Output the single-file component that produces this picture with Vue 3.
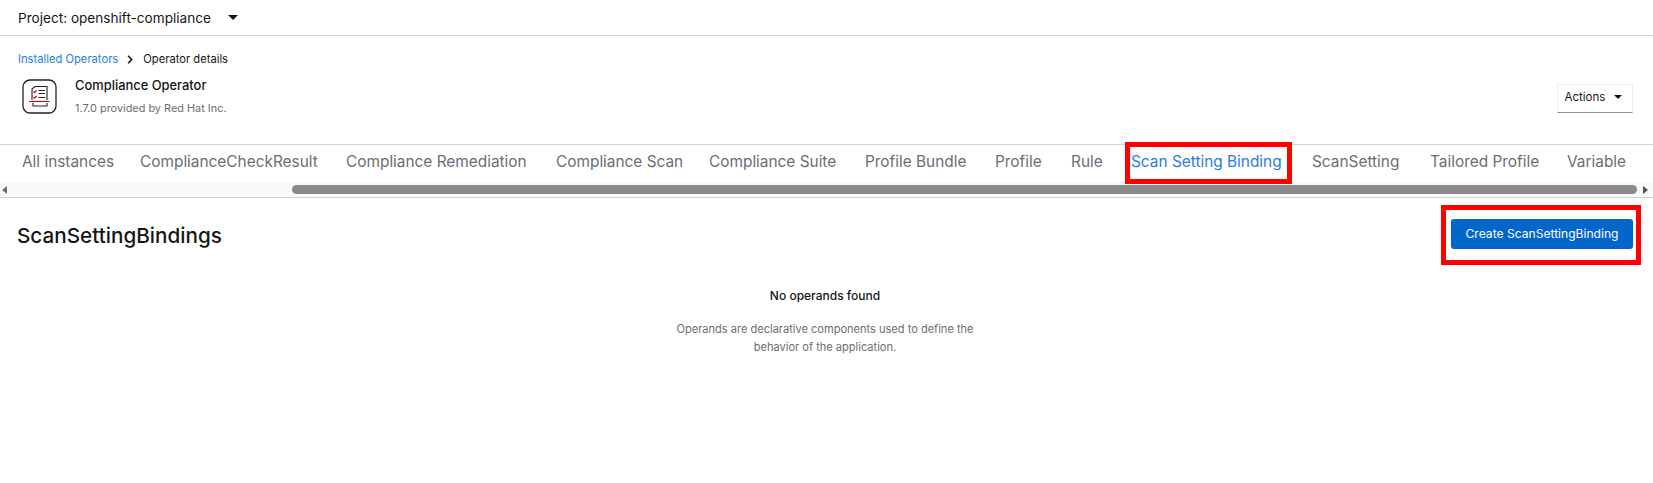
<script setup>
const tabs = [
  { label: 'All instances', w: 118 },
  { label: 'ComplianceCheckResult', w: 206 },
  { label: 'Compliance Remediation', w: 210 },
  { label: 'Compliance Scan', w: 153 },
  { label: 'Compliance Suite', w: 156 },
  { label: 'Profile Bundle', w: 130 },
  { label: 'Profile', w: 76 },
  { label: 'Rule', w: 60 },
  { label: 'Scan Setting Binding', w: 181, active: true },
  { label: 'ScanSetting', w: 118 },
  { label: 'Tailored Profile', w: 137 },
  { label: 'Variable' },
]
</script>

<template>
  <div class="page">
    <header class="project-bar">
      <span class="project">Project: openshift-compliance</span>
      <span class="caret caret-lg"></span>
    </header>

    <section class="details">
      <nav class="crumbs">
        <a class="crumb-link">Installed Operators</a>
        <svg class="crumb-sep" viewBox="0 0 8 12" width="6" height="9">
          <path d="M1.5 1 L6.2 6 L1.5 11" fill="none" stroke="#151515" stroke-width="2.2" />
        </svg>
        <span>Operator details</span>
      </nav>
      <div class="operator-row">
        <svg class="op-icon" viewBox="0 0 36 36" width="36" height="36">
          <rect x="1" y="1" width="33" height="33" rx="7" fill="#fff" stroke="#222" stroke-width="1.3" />
          <path d="M10 21 V10 L13 7.5 H25 V21 M11 24 V27 H25 V24" fill="none" stroke="#222" stroke-width="1.1" />
          <path d="M7 22.5 H27.5" stroke="#d00" stroke-width="1.1" />
          <path d="M11.5 12.5 l1.2 1.1 l2 -2.2 M11.5 18 l1.2 1.1 l2 -2.2" fill="none" stroke="#d00" stroke-width="1.2" />
          <path d="M16.5 11.5 H23 M16.5 14.5 H23 M16.5 18.5 H23" stroke="#222" stroke-width="1.1" />
        </svg>
        <div class="op-text">
          <div class="op-name">Compliance Operator</div>
          <div class="op-sub">1.7.0 provided by Red Hat Inc.</div>
        </div>
        <button class="actions">Actions <span class="caret"></span></button>
      </div>
    </section>

    <nav class="tabs">
      <a
        v-for="t in tabs"
        :key="t.label"
        class="tab"
        :class="{ active: t.active }"
        :style="t.w ? { width: t.w + 'px' } : null"
      >{{ t.label }}</a>
    </nav>
    <div class="scrollbar">
      <span class="arrow left"></span>
      <div class="track"><div class="thumb"></div></div>
      <span class="arrow right"></span>
    </div>

    <main class="content">
      <div class="list-head">
        <h1>ScanSettingBindings</h1>
        <div class="cta-mark">
          <button class="create">Create ScanSettingBinding</button>
        </div>
      </div>
      <div class="empty">
        <h2>No operands found</h2>
        <p>Operands are declarative components used to define the behavior of the application.</p>
      </div>
    </main>
  </div>
</template>

<style>
html, body { margin: 0; background: #fff; }
</style>

<style scoped>
.page {
  width: 1653px;
  height: 483px;
  overflow: hidden;
  background: #fff;
  color: #151515;
  font-family: Inter, "Noto Sans", sans-serif;
  box-sizing: border-box;
}
.project-bar {
  height: 35px;
  border-bottom: 1px solid #d2d2d2;
  display: flex;
  align-items: center;
  padding-left: 18px;
}
.project { font-size: 13.6px; width: 210px; white-space: nowrap; }
.caret {
  display: inline-block;
  width: 0;
  height: 0;
  border-left: 4px solid transparent;
  border-right: 4px solid transparent;
  border-top: 4px solid #151515;
  vertical-align: 2px;
  margin-left: 5px;
}
.caret-lg {
  border-left-width: 5px;
  border-right-width: 5px;
  border-top-width: 5px;
  margin: 0;
}
.details {
  height: 108px;
  padding: 15px 20px 0 18px;
  box-sizing: border-box;
}
.crumbs {
  display: flex;
  align-items: center;
  font-size: 11.2px;
  height: 16px;
  white-space: nowrap;
}
.crumb-link { color: #2b7de0; }
.crumb-sep { margin: 0 10px 0 9px; }
.operator-row {
  display: flex;
  align-items: flex-start;
  margin-top: 12px;
  padding-left: 4px;
}
.op-icon { flex: none; }
.op-text { margin-left: 17px; }
.op-name { font-size: 12.9px; font-weight: 500; line-height: 16px; color: #151515; margin-top: -1px; }
.op-sub { font-size: 10.9px; line-height: 16px; color: #6a6e73; margin-top: 6px; }
.actions {
  margin-left: auto;
  margin-top: 5px;
  width: 76px;
  height: 29px;
  padding: 0 4px 3px 0;
  background: #fff;
  border: 1px solid #ededed;
  border-bottom: 1px solid #8a8d90;
  color: #151515;
  font: 11.5px Inter, sans-serif;
}
.tabs {
  height: 37px;
  box-sizing: content-box;
  border-top: 1px solid #d2d2d2;
  display: flex;
  align-items: flex-start;
  padding-left: 22px;
  font-size: 15.4px;
  line-height: 34px;
  color: #6a6e73;
  white-space: nowrap;
}
.tab { display: block; flex: none; }
.active { color: #2b7de0; position: relative; }
.active::after {
  content: "";
  position: absolute;
  left: -6px;
  top: -3px;
  width: 167px;
  height: 42px;
  box-sizing: border-box;
  border: 5px solid #f00;
}
.scrollbar {
  height: 15px;
  background: #fafafa;
  border-bottom: 1px solid #d2d2d2;
  display: flex;
  align-items: center;
}
.track { flex: 1; height: 9px; padding-left: 285px; padding-right: 6px; box-sizing: border-box; }
.thumb { height: 9px; background: #8a8a8a; border-radius: 5px; }
.arrow {
  width: 0;
  height: 0;
  border-top: 4px solid transparent;
  border-bottom: 4px solid transparent;
}
.arrow.left { border-right: 5px solid #6a6e73; margin-left: 2px; }
.arrow.right { border-left: 5px solid #505050; margin-right: 5px; }
.content { padding: 0 20px 0 17px; }
.list-head {
  display: flex;
  align-items: center;
  justify-content: space-between;
  height: 68px;
  padding-top: 3px;
}
h1 { margin: 0; font-size: 20.7px; font-weight: 500; color: #151515; }
.cta-mark {
  border: 5px solid #f00;
  box-sizing: border-box;
  width: 200px;
  height: 60px;
  margin-right: -8px;
  margin-top: -1px;
  padding: 9px 0 0 5px;
}
.create {
  display: block;
  width: 182px;
  height: 30px;
  padding: 0;
  border: 0;
  border-radius: 3px;
  background: #06c;
  color: #fff;
  font: 12.1px Inter, sans-serif;
}
.empty {
  width: 340px;
  margin: 18px auto 0;
  text-align: center;
}
h2 { margin: 0; font-size: 12px; font-weight: 500; line-height: 18px; color: #151515; }
p { margin: 15px 0 0; font-size: 11.05px; line-height: 18px; color: #6a6e73; padding: 0 10px; }
</style>
